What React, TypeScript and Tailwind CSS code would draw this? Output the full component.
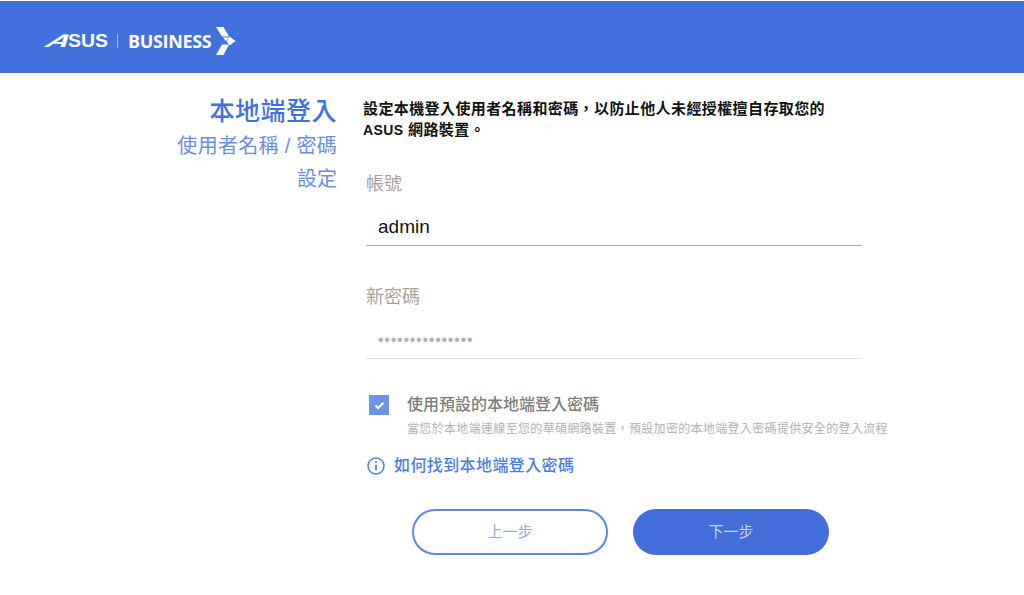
import React from "react";

const sans = "font-['Liberation_Sans','Noto_Sans_CJK_TC',sans-serif]";

const BrandMark = () => (
  <svg width="20" height="28" viewBox="0 0 20 28" fill="#fff" className="ml-[5px]">
    <path d="M0 0 H7.5 L13 9.5 H6 Z" />
    <path d="M7 10.5 H12.5 L9.8 14 Z" />
    <path d="M13.5 9.5 L19.5 14 L13.5 18.5 L10.5 14 Z" />
    <path d="M6 17.5 H13 L7.5 28 H0 Z" />
  </svg>
);

const Field = ({ label, value, muted }: { label: string; value: string; muted?: boolean }) => (
  <div className="ml-[3px] w-[496px]">
    <div className="text-[18px] leading-[26px] text-[#a8a29e]">{label}</div>
    <div
      className={
        muted
          ? "mt-[12px] flex h-[37px] items-center border-b border-[#e2e2e2] pl-3 text-[16px] tracking-[0.75px] text-[#b0b0b0]"
          : "mt-[12px] flex h-[37px] items-center border-b border-[#a9a9a9] pl-3 text-[19px] text-[#111]"
      }
    >
      {value}
    </div>
  </div>
);

export default function App() {
  return (
    <div lang="zh-TW" className={`h-[595px] w-[1024px] overflow-hidden bg-white pt-px ${sans}`}>
      <header className="flex h-[72px] items-center bg-[#4270dc] pl-[45px] pt-[7px] text-white">
        <span className="flex w-[63px] items-center font-['Liberation_Sans',sans-serif] text-[18px] font-bold leading-none">
          <span className="w-[23px] origin-left scale-x-[1.75] skew-x-[-28deg] pl-[2px]">A</span>
          <span className="origin-left scale-x-[1.08]">SUS</span>
        </span>
        <span className="ml-[9px] h-[14px] w-px bg-[#a9bdec]" />
        <span className="ml-[10px] font-['Open_Sans',sans-serif] text-[18px] font-bold leading-none tracking-[-0.35px]">
          BUSINESS
        </span>
        <BrandMark />
      </header>

      <main className="flex">
        <aside className="w-[337px] pt-[23px] text-right text-[#4270dc]">
          <h1 className="text-[25px] font-medium leading-[30px] tracking-[0.5px]">本地端登入</h1>
          <p className="mt-[7px] text-[20px] leading-[26px] tracking-[0.3px] text-[#6a8ee4]">使用者名稱 / 密碼</p>
          <p className="mt-[7px] text-[20px] leading-[26px] text-[#6a8ee4]">設定</p>
        </aside>

        <section className="ml-[26px] flex-1 pt-[25px]">
          <p className="text-[15px] font-bold leading-[21px] tracking-[0.4px] text-[#111]">
            設定本機登入使用者名稱和密碼，以防止他人未經授權擅自存取您的
            <br />
            <span className="text-[14px]">ASUS</span> 網路裝置。
          </p>

          <div className="mt-[30px]">
            <Field label="帳號" value="admin" />
          </div>
          <div className="mt-[38px]">
            <Field label="新密碼" value="•••••••••••••••" muted />
          </div>

          <div className="ml-[6px] mt-[34px] flex">
            <span className="mt-[2px] flex h-5 w-5 items-center justify-center bg-[#6b93e6]">
              <svg width="11" height="9" viewBox="0 0 11 9" fill="none">
                <path d="M1.5 4.5 L4.2 7 L9.5 1.8" stroke="#fff" strokeWidth="2.2" />
              </svg>
            </span>
            <div className="ml-[18px]">
              <div className="mt-px text-[16px] font-medium leading-[22px] text-[#7d7d7d]">
                使用預設的本地端登入密碼
              </div>
              <div className="mt-[4px] whitespace-nowrap text-[12px] leading-[18px] tracking-[0.33px] text-[#b2b2b2]">
                當您於本地端連線至您的華碩網路裝置，預設加密的本地端登入密碼提供安全的登入流程
              </div>
            </div>
          </div>

          <div className="ml-[4px] mt-[17px] flex items-center">
            <svg width="18" height="18" viewBox="0 0 18 18" fill="none" stroke="#4d7de4">
              <circle cx="9" cy="9" r="8" strokeWidth="1.4" />
              <path d="M9 7.8 V13.5" strokeWidth="1.7" />
              <circle cx="9" cy="5" r="1" fill="#4d7de4" stroke="none" />
            </svg>
            <span className="ml-[9px] text-[16px] font-medium leading-[22px] tracking-[0.4px] text-[#4d7de4]">
              如何找到本地端登入密碼
            </span>
          </div>

          <div className="ml-[49px] mt-[32px] flex gap-[25px]">
            <button className="h-[46px] w-[196px] rounded-full border-2 border-[#5f86e2] bg-white text-[15px] text-[#8ea9ea]">
              上一步
            </button>
            <button className="h-[46px] w-[196px] rounded-full bg-[#426ddb] text-[15px] text-[#c5d3f4]">
              下一步
            </button>
          </div>
        </section>
      </main>
    </div>
  );
}
